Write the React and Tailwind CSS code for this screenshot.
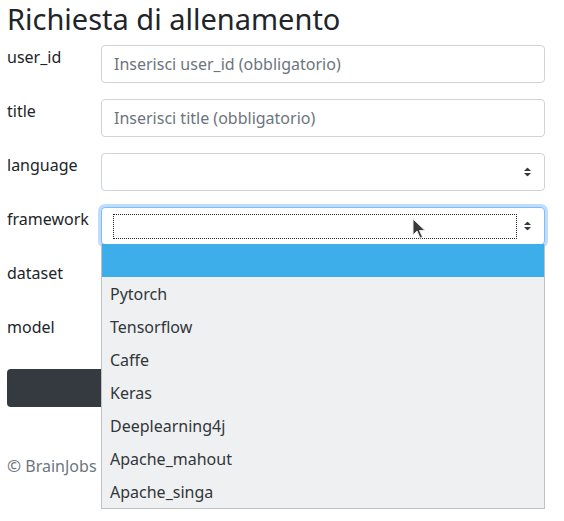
import React from 'react';

const fields = [
  { name: 'user_id', kind: 'input', placeholder: 'Inserisci user_id (obbligatorio)' },
  { name: 'title', kind: 'input', placeholder: 'Inserisci title (obbligatorio)' },
  { name: 'language', kind: 'select' },
  { name: 'framework', kind: 'select', focused: true },
  { name: 'dataset', kind: 'select' },
  { name: 'model', kind: 'select' },
];

const frameworks = ['', 'Pytorch', 'Tensorflow', 'Caffe', 'Keras', 'Deeplearning4j', 'Apache_mahout', 'Apache_singa'];

const SortArrows = () => (
  <svg className="absolute right-[13px] top-1/2 -translate-y-1/2 w-[7px] h-[9px]" viewBox="0 0 7 9" fill="#343a40">
    <path d="M3.5 0L7 3.5H0z" />
    <path d="M3.5 9L0 5.5h7z" />
  </svg>
);

const App = () => {
  return (
    <div className="relative w-[564px] h-[521px] overflow-hidden bg-white text-[#212529] font-['Noto_Sans',sans-serif]">
      <div className="pl-[7px] pr-[19px]">
        <h3 className="text-[29px] leading-[34px] font-normal pt-[2px] mb-[9px]">Richiesta di allenamento</h3>

        <form className="flex flex-col gap-4">
          {fields.map(f => (
            <div key={f.name} className="flex items-start">
              <label className="w-[94px] text-base leading-6">{f.name}</label>
              {f.kind === 'input' ? (
                <input
                  type="text"
                  placeholder={f.placeholder}
                  className="flex-1 h-[38px] border border-[#ced4da] rounded px-3 text-base text-[#495057] placeholder:text-[#6c757d] outline-none"
                />
              ) : (
                <div className={`relative flex-1 h-[38px] rounded border bg-white ${f.focused ? 'border-[#80bdff] shadow-[0_0_0_3px_rgba(0,123,255,0.25)]' : 'border-[#ced4da]'}`}>
                  {f.focused && (
                    <div className="absolute left-[11px] top-[6px] right-[27px] bottom-[5px] border border-dotted border-[#212529]"></div>
                  )}
                  <SortArrows />
                </div>
              )}
            </div>
          ))}
          <button type="button" className="w-full h-[38px] rounded bg-[#343a40]"></button>
        </form>

        <p className="mt-[47px] text-base leading-6 text-[#6c757d]">
          <span className="text-[17px]">©</span> BrainJobs
        </p>
      </div>

      {/* open select list for framework */}
      <ul className="absolute left-[101px] top-[244px] w-[444px] bg-[#eff0f1] border border-t-0 border-[#bfc1c3] text-[#31363b] text-base">
        {frameworks.map((fw, i) => (
          <li key={i} className={`h-[33px] px-2 flex items-center ${i === 0 ? 'bg-[#3daee9]' : ''}`}>{fw}</li>
        ))}
      </ul>

      {/* mouse pointer */}
      <svg className="absolute left-[412px] top-[218px] w-[14px] h-[21px]" viewBox="0 0 14 21">
        <path d="M1 1v16l4-4 3 7 2.5-1-3-6.5H13z" fill="#3a3a3a" stroke="#e8e8e8" strokeWidth="1" strokeLinejoin="round" />
      </svg>
    </div>
  );
};

export default App;
